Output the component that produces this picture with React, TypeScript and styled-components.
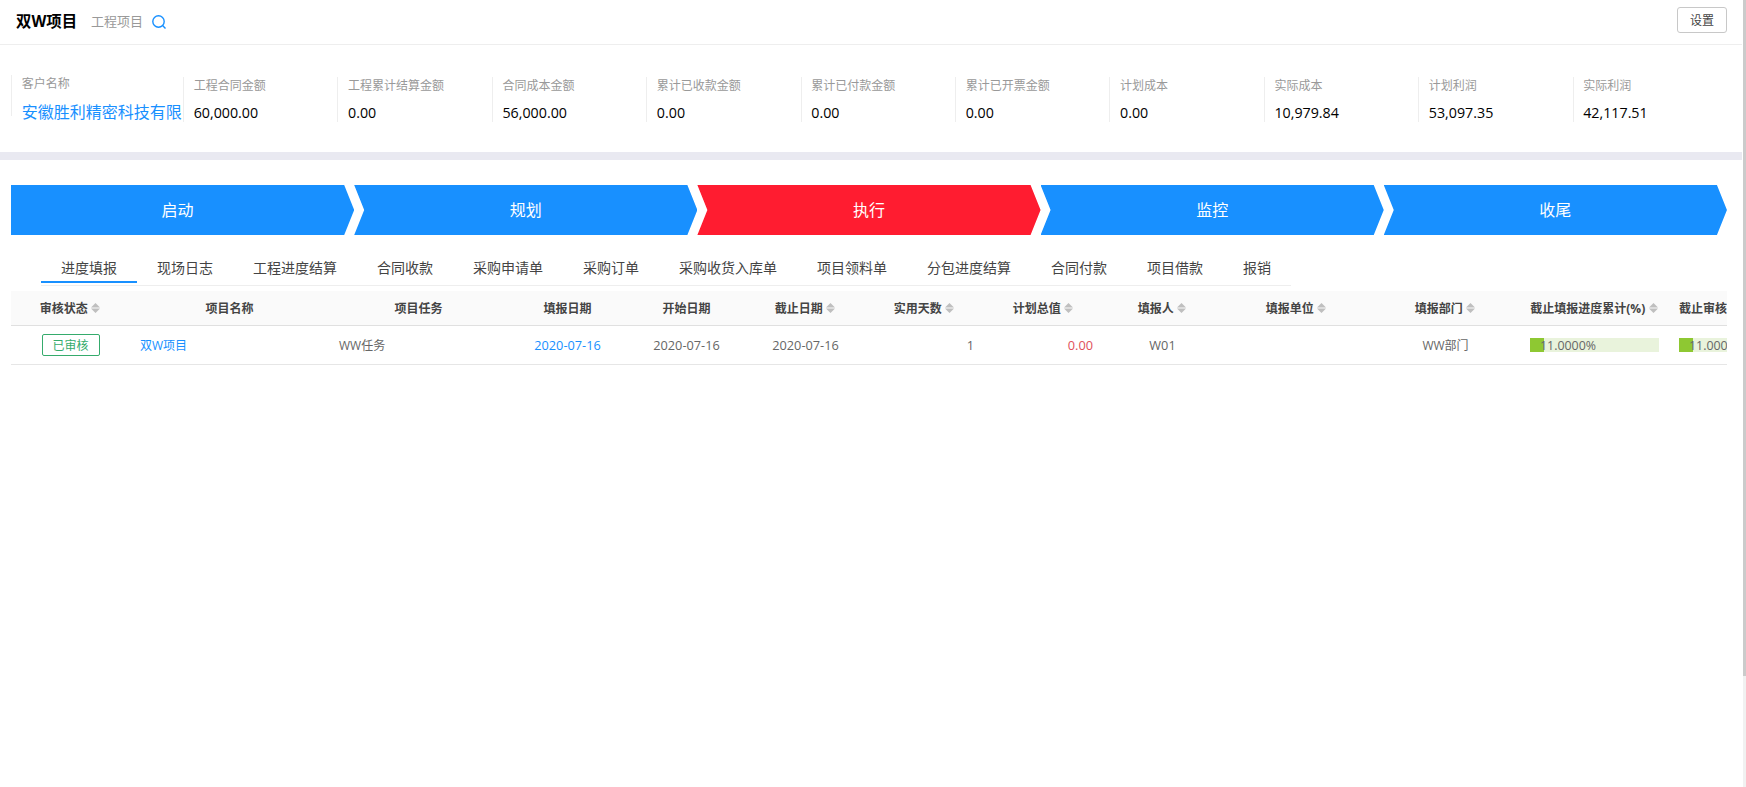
import React from 'react';
import styled, { createGlobalStyle, css } from 'styled-components';

const GlobalStyle = createGlobalStyle`
  * { box-sizing: border-box; }
  body {
    margin: 0;
    background: #fff;
    font-family: 'Open Sans', 'Noto Sans CJK SC', sans-serif;
    font-size: 12px;
    color: #444;
    overflow: hidden;
  }
`;

const Page = styled.div`
  display: flex;
  height: 787px;
  width: 1746px;
`;

const Main = styled.main`
  width: 1742px;
  margin-right: 1px;
`;

const ScrollTrack = styled.div`
  width: 3px;
  height: 100%;
  background: #f1f1f1;
`;

const ScrollThumb = styled.div`
  height: 676px;
  background: #cbcbcb;
`;

const Header = styled.header`
  display: flex;
  align-items: center;
  height: 45px;
  padding: 0 15px 4px 16px;
  border-bottom: 1px solid #eee;
`;

const Title = styled.h1`
  margin: 4px 0 0;
  font-size: 15.4px;
  line-height: 20px;
  font-weight: 700;
  color: #000;
`;

const Subtitle = styled.span`
  margin: 2px 9px 0 14px;
  font-size: 13px;
  line-height: 20px;
  color: #999;
`;

const SearchIcon = styled.svg`
  display: block;
  width: 14px;
  height: 14px;
  margin-top: 3px;
`;

const SettingsButton = styled.button`
  margin: 0 0 0 auto;
  width: 50px;
  height: 26px;
  padding: 2px 0 0;
  border: 1px solid #c8c8c8;
  border-radius: 3px;
  background: #fff;
  font: inherit;
  line-height: 20px;
  color: #444;
`;

const Stats = styled.section`
  display: grid;
  grid-template-columns: 172px repeat(10, 154.4px);
  align-items: start;
  height: 107px;
  padding: 30px 0 0 11px;
  overflow: hidden;
`;

const Stat = styled.div<{ $customer?: boolean }>`
  height: ${(p) => (p.$customer ? 41 : 45)}px;
  margin-top: ${(p) => (p.$customer ? 0 : 2)}px;
  padding: 1px 0 0 9.7px;
  border-left: 1px solid #eee;
  white-space: nowrap;
`;

const StatLabel = styled.div`
  font-size: 12px;
  line-height: 16px;
  color: #999;
`;

const StatValue = styled.div<{ $customer?: boolean }>`
  font-size: ${(p) => (p.$customer ? 16 : 14.25)}px;
  line-height: 20px;
  margin-top: ${(p) => (p.$customer ? 10 : 9)}px;
  color: ${(p) => (p.$customer ? '#1890ff' : '#000')};
`;

const Band = styled.div`
  height: 8px;
  background: #e9e9f1;
`;

const Steps = styled.nav`
  display: grid;
  grid-template-columns: repeat(5, 343.2px);
  margin: 25px 15px 0 11px;
`;

const Step = styled.div<{ $current?: boolean; $first?: boolean }>`
  height: 50px;
  padding-right: ${(p) => (p.$first ? 10 : 0)}px;
  font-size: 16px;
  line-height: 51px;
  text-align: center;
  color: #fff;
  background: ${(p) => (p.$current ? '#ff1c30' : '#1890ff')};
  clip-path: ${(p) =>
    p.$first
      ? 'polygon(0 0, calc(100% - 10px) 0, 100% 50%, calc(100% - 10px) 100%, 0 100%)'
      : 'polygon(0 0, calc(100% - 10px) 0, 100% 50%, calc(100% - 10px) 100%, 0 100%, 10px 50%)'};
`;

const Tabs = styled.nav`
  display: flex;
  width: max-content;
  height: 35px;
  margin: 16px 0 5px 41px;
  border-bottom: 1px solid #eee;
`;

const Tab = styled.div<{ $active?: boolean }>`
  height: 32px;
  padding: 0 20px;
  font-size: 14px;
  line-height: 33px;
  color: #444;
  border-bottom: 2px solid ${(p) => (p.$active ? '#1890ff' : 'transparent')};
`;

const Table = styled.section`
  margin: 0 15px 0 11px;
  overflow: hidden;
`;

const columnsLayout = css`
  display: grid;
  grid-template-columns: 119px 199px 179px repeat(6, 119px) repeat(4, 149px);
  align-items: center;
`;

const HeadRow = styled.div`
  ${columnsLayout}
  height: 35px;
  background: #fafafa;
  border-bottom: 1px solid #e0e0e0;
`;

const BodyRow = styled.div`
  ${columnsLayout}
  height: 39px;
  border-bottom: 1px solid #e6e6e6;
`;

const HeadCell = styled.div<{ $left?: boolean }>`
  display: flex;
  justify-content: ${(p) => (p.$left ? 'flex-start' : 'center')};
  align-items: center;
  padding: 1px ${(p) => (p.$left ? 10 : 0)}px 0;
  font-weight: 700;
  line-height: 18px;
  color: #444;
  white-space: nowrap;
`;

const SortIcon = styled.svg`
  flex: none;
  width: 9px;
  height: 10px;
  margin: 0 1px 1px 3.5px;
`;

type Align = 'left' | 'center' | 'right';

const Cell = styled.div<{ $align?: Align; $color?: string; $latin?: boolean }>`
  padding: ${(p) => (p.$latin ? 0 : 1)}px 10px 0;
  font-size: ${(p) => (p.$latin ? 12.75 : 12)}px;
  line-height: 18px;
  text-align: ${(p) => p.$align ?? 'center'};
  color: ${(p) => p.$color ?? '#666'};
  white-space: nowrap;
`;

const StatusTag = styled.span`
  display: block;
  width: 58px;
  height: 22px;
  margin: -1px 0 0 21px;
  padding-right: 1px;
  border: 1px solid #35ab6c;
  border-radius: 2px;
  line-height: 21px;
  color: #35ab6c;
`;

const Progress = styled.div`
  height: 14px;
  margin-top: -1px;
  background: linear-gradient(to right, #8ec832 14px, #e9f3dc 14px);
  line-height: 15px;
  text-align: left;
  padding-left: 10px;
  font-size: 12.4px;
`;

const stats: [string, string][] = [
  ['工程合同金额', '60,000.00'],
  ['工程累计结算金额', '0.00'],
  ['合同成本金额', '56,000.00'],
  ['累计已收款金额', '0.00'],
  ['累计已付款金额', '0.00'],
  ['累计已开票金额', '0.00'],
  ['计划成本', '0.00'],
  ['实际成本', '10,979.84'],
  ['计划利润', '53,097.35'],
  ['实际利润', '42,117.51'],
];

const steps = ['启动', '规划', '执行', '监控', '收尾'];

const tabs = [
  '进度填报', '现场日志', '工程进度结算', '合同收款', '采购申请单', '采购订单',
  '采购收货入库单', '项目领料单', '分包进度结算', '合同付款', '项目借款', '报销',
];

const columns: { title: string; sort?: boolean; left?: boolean }[] = [
  { title: '审核状态', sort: true },
  { title: '项目名称' },
  { title: '项目任务' },
  { title: '填报日期' },
  { title: '开始日期' },
  { title: '截止日期', sort: true },
  { title: '实用天数', sort: true },
  { title: '计划总值', sort: true },
  { title: '填报人', sort: true },
  { title: '填报单位', sort: true },
  { title: '填报部门', sort: true },
  { title: '截止填报进度累计(%)', sort: true },
  { title: '截止审核', left: true },
];

const Sort = () => (
  <SortIcon viewBox="0 0 9 10" fill="#bfbfbf">
    <path d="M4.5 0L9 4.4H0zM4.5 10L0 5.6H9z" />
  </SortIcon>
);

export default function App() {
  return (
    <>
      <GlobalStyle />
      <Page>
        <Main>
          <Header>
            <Title>双W项目</Title>
            <Subtitle>工程项目</Subtitle>
            <SearchIcon viewBox="0 0 14 14" fill="none" stroke="#1890ff" strokeWidth="1.4">
              <circle cx="6.5" cy="6.5" r="5.7" />
              <path d="M10.6 10.6L13.5 13.5" />
            </SearchIcon>
            <SettingsButton>设置</SettingsButton>
          </Header>
          <Stats>
            <Stat $customer>
              <StatLabel>客户名称</StatLabel>
              <StatValue $customer>安徽胜利精密科技有限</StatValue>
            </Stat>
            {stats.map(([label, value]) => (
              <Stat key={label}>
                <StatLabel>{label}</StatLabel>
                <StatValue>{value}</StatValue>
              </Stat>
            ))}
          </Stats>
          <Band />
          <Steps>
            {steps.map((name, i) => (
              <Step key={name} $first={i === 0} $current={i === 2}>{name}</Step>
            ))}
          </Steps>
          <Tabs>
            {tabs.map((name, i) => (
              <Tab key={name} $active={i === 0}>{name}</Tab>
            ))}
          </Tabs>
          <Table>
            <HeadRow>
              {columns.map((c) => (
                <HeadCell key={c.title} $left={c.left}>
                  {c.title}
                  {c.sort && <Sort />}
                </HeadCell>
              ))}
            </HeadRow>
            <BodyRow>
              <Cell><StatusTag>已审核</StatusTag></Cell>
              <Cell $align="left" $color="#1890ff">双W项目</Cell>
              <Cell $align="left">WW任务</Cell>
              <Cell $latin $color="#1890ff">2020-07-16</Cell>
              <Cell $latin>2020-07-16</Cell>
              <Cell $latin>2020-07-16</Cell>
              <Cell $latin $align="right">1</Cell>
              <Cell $latin $align="right" $color="#e0505a">0.00</Cell>
              <Cell $latin>W01</Cell>
              <Cell />
              <Cell>WW部门</Cell>
              <Cell><Progress>11.0000%</Progress></Cell>
              <Cell><Progress>11.000</Progress></Cell>
            </BodyRow>
          </Table>
        </Main>
        <ScrollTrack>
          <ScrollThumb />
        </ScrollTrack>
      </Page>
    </>
  );
}
